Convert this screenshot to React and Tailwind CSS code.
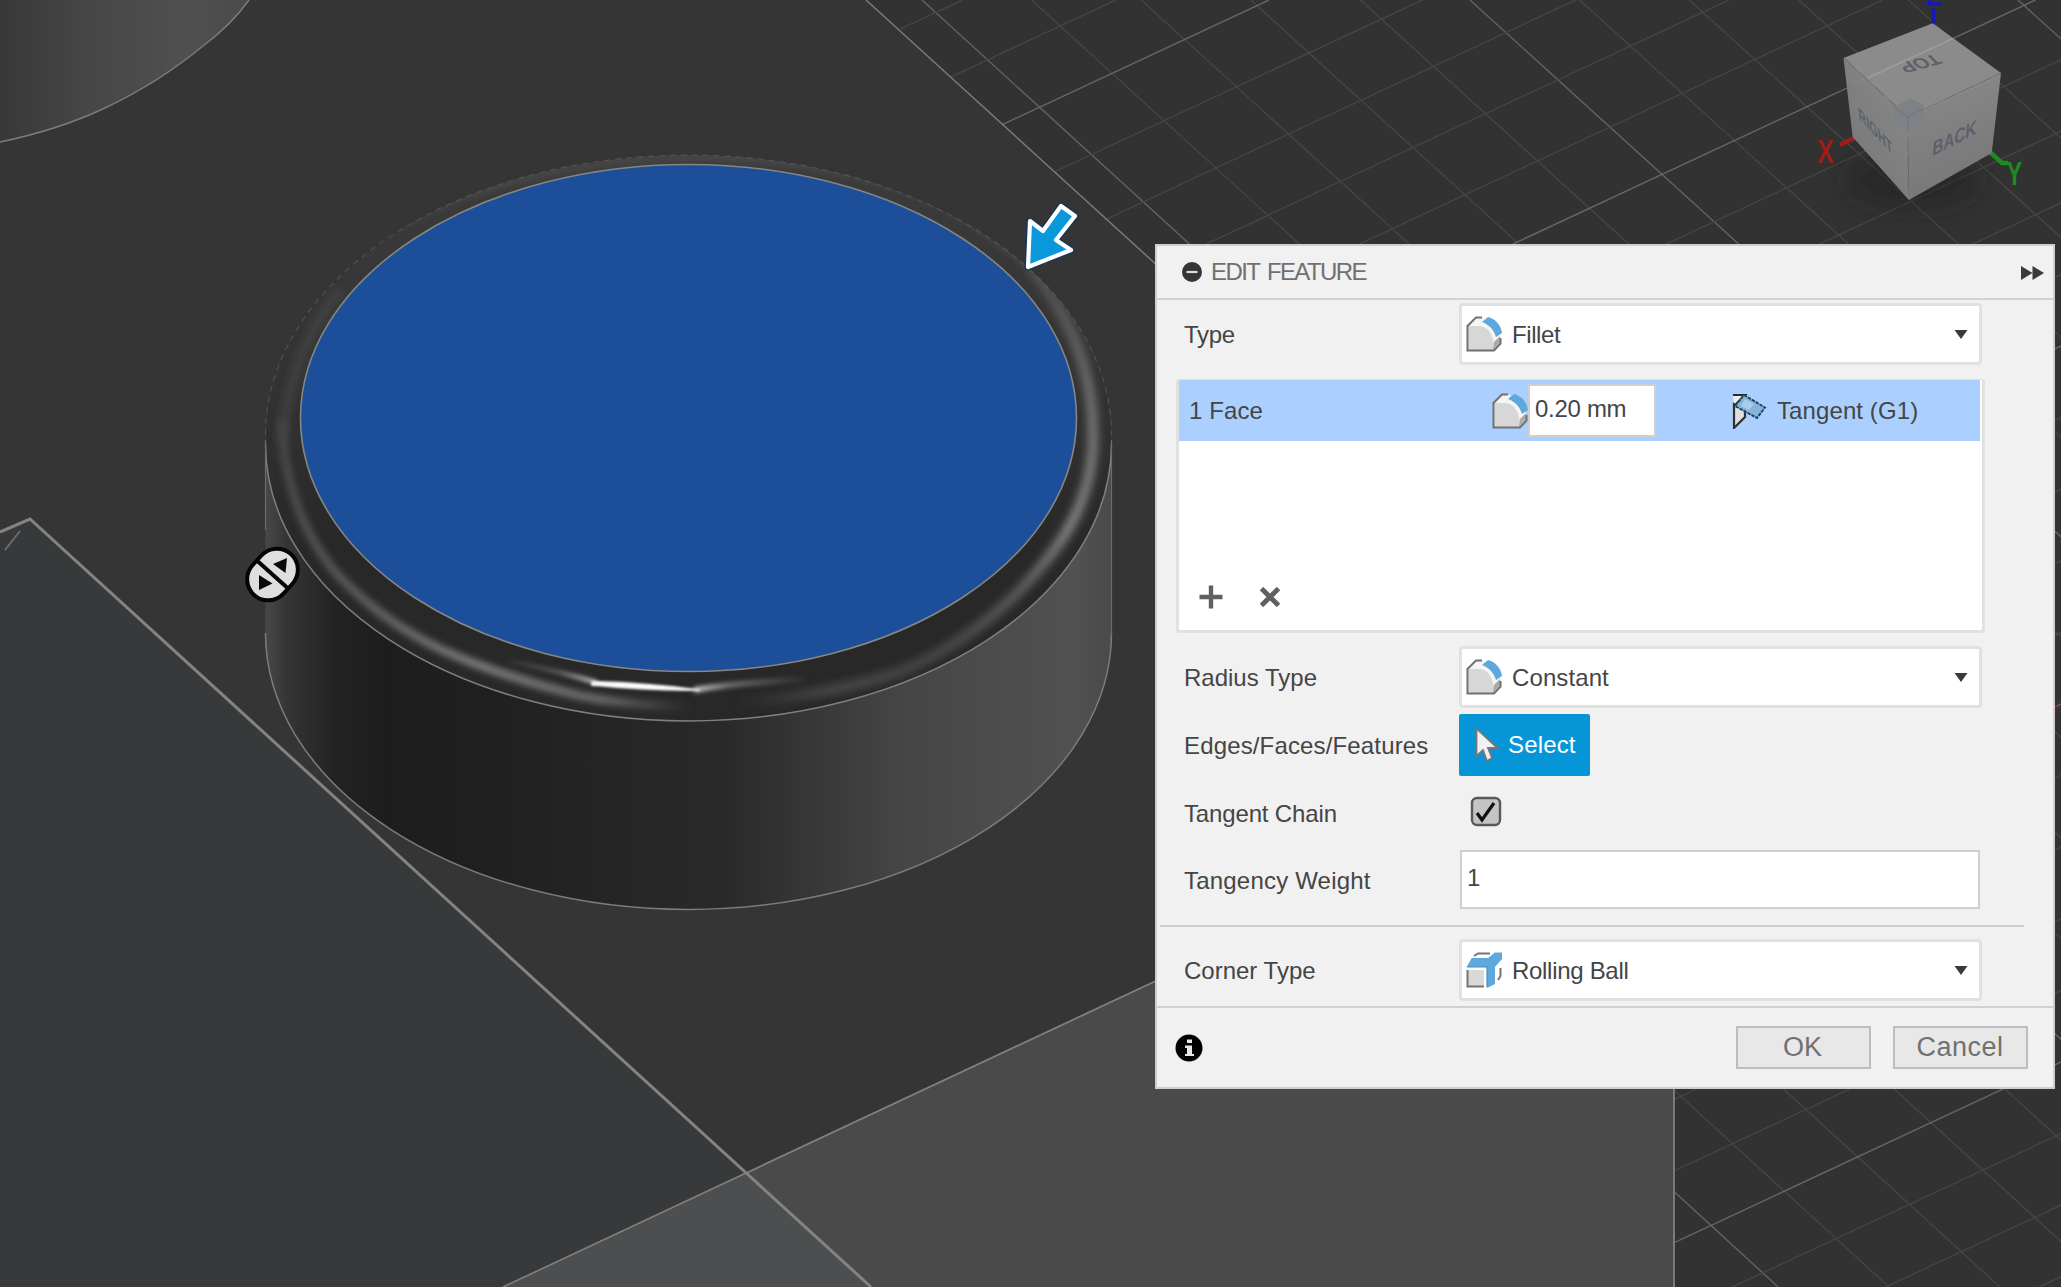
import React from 'react';

const range = (a, b) => Array.from({ length: b - a + 1 }, (_, i) => a + i);

function Grid() {
  return (
    <g fill="none" clipPath="url(#gridArea)">
      {range(-6, 11).map((k) => {
        const x = 922 + 109.6 * k;
        return (
          <line key={'a' + k} x1={x} y1="0" x2={x + 1287 * (1.096 + 0.001 * k)} y2="1287"
            stroke={k % 5 === 0 ? '#626262' : '#454545'} strokeWidth="1.4" />
        );
      })}
      {range(-8, 20).map((k) => {
        const x = 2035.5 + 153.3 * k;
        return (
          <line key={'b' + k} x1={x} y1="0" x2={x - 1287 / 0.467} y2="1287"
            stroke={k % 5 === 0 ? '#666' : '#454545'} strokeWidth="1.4" />
        );
      })}
    </g>
  );
}

function ViewCube() {
  return (
    <g>
      <ellipse cx="1912" cy="180" rx="66" ry="26" fill="#1c1c1c" opacity=".5" filter="url(#blur14)" />
      <path d="M1933.5 8V26" stroke="#1a1ab0" strokeWidth="4" />
      <path d="M1856 137L1840 145" stroke="#a01c1c" strokeWidth="4.5" />
      <path d="M1990 152L2002 163H2008" stroke="#1c8c20" strokeWidth="4.5" fill="none" />
      <path d="M1932.7 23.3L2001 73L1907.7 117L1843.500 58Z" fill="#8b8b8b" />
      <path d="M1843.500 58L1907.7 117L1909 200L1852.7 137Z" fill="url(#cubeL)" />
      <path d="M1907.7 117L2001 73L1991.7 153L1909 200Z" fill="url(#cubeR)" />
      <path d="M1780 119L2040 -2" stroke="#aaa" strokeWidth="1.3" opacity=".65" clipPath="url(#cubeClip)" />
      <path d="M1907.7 117L2001 73M1845 59L1907.7 117" stroke="#707478" strokeWidth="1.1" strokeDasharray="13 7" />
      <path d="M1907.7 117V195" stroke="#70757a" strokeWidth="1" strokeDasharray="12 8" />
      <path d="M1850 84L1915 55M1908 117L2000 76" stroke="#aaa" opacity=".2" />
      <path d="M1894 108L1910 98L1924 105V122L1909 132L1894 124Z" fill="#7e8286" />
      <path d="M1894 108L1907.7 117L1924 108M1907.7 117V131" stroke="#70757a" strokeWidth="1" fill="none" />
      <g fontFamily="'Liberation Sans', Arial, sans-serif" fontWeight="700" fontSize="17" textAnchor="middle" fill="#5c6169">
        <text transform="matrix(-1.08 .3 -.75 -.78 1916 59)">TOP</text>
        <text transform="matrix(.9 -.46 -.08 1.2 1954 145)">BACK</text>
        <text transform="matrix(.64 .68 .12 1.05 1876 137)">RIGHT</text>
      </g>
      <g fontFamily="'Liberation Sans', Arial, sans-serif" fontWeight="700" fontSize="33" textAnchor="middle">
        <text transform="matrix(.74 0 0 1 1825.5 162.5)" fill="#a01c1c">X</text>
        <text transform="matrix(.7 0 0 1 2014.5 185)" fill="#1c8c20">Y</text>
        <text transform="matrix(.8 0 0 1 1934 5.5)" fill="#1a1ab0">Z</text>
      </g>
    </g>
  );
}

function Puck() {
  return (
    <g>
      <path d="M265.5 435A423 280 0 0 1 1111.5 435V633A423 277 0 0 1 265.5 633Z" fill="url(#side)" />
      <path d="M265.5 435A423 280 0 0 1 1111.5 435V444A423 277 0 0 1 265.5 444Z" fill="url(#rim)" />
      <g clipPath="url(#rimClip)" fill="none">
        <path d="M283 440C284 400 300 340 340 290" stroke="#444" strokeWidth="7" filter="url(#blur4)" />
        <path d="M282 420C282 466 296 526 336 573Q380 620 440 649Q497 675 573 694Q613 704 690 707" stroke="url(#hiL)" strokeWidth="9" filter="url(#blur3)" />
        <path d="M1030 265C1080 330 1094 385 1093 440C1092 490 1072 530 1045 562C1015 600 965 645 900 672Q840 692 740 706" stroke="url(#hiR)" strokeWidth="10" filter="url(#blur4)" />
        <path d="M400 225C560 140 790 140 930 200C990 230 1030 265 1060 300" stroke="#4c4c4c" strokeWidth="5" filter="url(#blur3)" />
        <path d="M500 659Q567 673 597 683" stroke="url(#fadeL)" strokeWidth="4.5" filter="url(#blur2)" />
        <path d="M694 690Q735 683 810 679" stroke="url(#fadeR)" strokeWidth="5.500" filter="url(#blur2)" />
        <path d="M592 681.500Q650 683 700 690Q650 691 592 685Z" stroke="#e6e6e6" fill="#fff" strokeWidth="1.500" filter="url(#blur1)" />
      </g>
      <path d="M265.5 435A423 280 0 0 1 1111.5 435" fill="none" stroke="#666" strokeWidth="1.1" strokeDasharray="6 5" opacity=".6" />
      <path d="M265.5 444A423 277 0 0 0 1111.5 444" fill="none" stroke="#808080" strokeWidth="1.5" />
      <path d="M265.5 633A423 276.5 0 0 0 1111.5 633" fill="none" stroke="#7c7c7c" strokeWidth="1.5" />
      <path d="M1111.5 440V635M265.5 440V530" stroke="#6c6c6c" strokeWidth="1.2" />
      <ellipse cx="688.5" cy="418" rx="388" ry="253.5" fill="#1c4e9a" stroke="#868682" strokeWidth="1.6" />
    </g>
  );
}

function Scene() {
  return (
    <svg className="block h-[1287px] w-[2061px]" viewBox="0 0 2061 1287">
      <defs>
        <clipPath id="gridArea"><path d="M865 0L1150 260L1674 760V1287H2061V0Z" /></clipPath>
        <clipPath id="rimClip"><path d="M265.5 435A423 280 0 0 1 1111.5 435V444A423 277 0 0 1 265.5 444Z" /></clipPath>
        <clipPath id="cubeClip"><path d="M1932.7 23.3L2001 73L1907.7 117L1843 57Z" /></clipPath>
        <linearGradient id="side">
          <stop offset="0" stopColor="#484848" /><stop offset=".025" stopColor="#353535" />
          <stop offset=".08" stopColor="#232323" /><stop offset=".14" stopColor="#1d1d1d" />
          <stop offset=".27" stopColor="#202020" /><stop offset=".4" stopColor="#252525" />
          <stop offset=".54" stopColor="#292929" /><stop offset=".63" stopColor="#353535" />
          <stop offset=".75" stopColor="#454545" /><stop offset=".86" stopColor="#4c4c4c" />
          <stop offset=".96" stopColor="#515151" /><stop offset="1" stopColor="#4a4a4a" />
        </linearGradient>
        <linearGradient id="rim" gradientUnits="userSpaceOnUse" x1="0" y1="155" x2="0" y2="721">
          <stop offset="0" stopColor="#3c3c3c" /><stop offset=".4" stopColor="#333" />
          <stop offset=".7" stopColor="#282828" /><stop offset="1" stopColor="#282828" />
        </linearGradient>
        <linearGradient id="hiL" gradientUnits="userSpaceOnUse" x1="282" y1="430" x2="690" y2="706">
          <stop offset="0" stopColor="#444" /><stop offset=".3" stopColor="#585858" />
          <stop offset=".6" stopColor="#7a7a7a" /><stop offset=".85" stopColor="#686868" /><stop offset="1" stopColor="#282828" />
        </linearGradient>
        <linearGradient id="hiR" gradientUnits="userSpaceOnUse" x1="0" y1="265" x2="0" y2="705">
          <stop offset="0" stopColor="#505050" /><stop offset=".35" stopColor="#757575" />
          <stop offset=".6" stopColor="#848484" /><stop offset=".75" stopColor="#5c5c5c" />
          <stop offset=".9" stopColor="#464646" /><stop offset=".97" stopColor="#4a4a4a" /><stop offset="1" stopColor="#282828" />
        </linearGradient>
        <linearGradient id="fadeL" gradientUnits="userSpaceOnUse" x1="500" y1="0" x2="597" y2="0">
          <stop offset="0" stopColor="#282828" /><stop offset=".6" stopColor="#585858" /><stop offset="1" stopColor="#c8c8c8" />
        </linearGradient>
        <linearGradient id="fadeR" gradientUnits="userSpaceOnUse" x1="694" y1="0" x2="810" y2="0">
          <stop offset="0" stopColor="#ccc" /><stop offset=".3" stopColor="#707070" /><stop offset="1" stopColor="#282828" />
        </linearGradient>
        <linearGradient id="corner" gradientUnits="userSpaceOnUse" x1="0" y1="0" x2="247" y2="0">
          <stop offset="0" stopColor="#383838" /><stop offset=".35" stopColor="#464646" />
          <stop offset=".75" stopColor="#505050" /><stop offset="1" stopColor="#4a4a4a" />
        </linearGradient>
        <linearGradient id="cubeL" x1="1" y1="0" x2=".2" y2="1">
          <stop offset="0" stopColor="#8b8b8b" /><stop offset="1" stopColor="#767676" />
        </linearGradient>
        <linearGradient id="cubeR" x1="0" y1="0" x2=".3" y2="1">
          <stop offset="0" stopColor="#8b8b8b" /><stop offset="1" stopColor="#777" />
        </linearGradient>
        <filter id="blur1" x="-20%" y="-100%" width="140%" height="300%"><feGaussianBlur stdDeviation="1.1" /></filter>
        <filter id="blur2" x="-20%" y="-100%" width="140%" height="300%"><feGaussianBlur stdDeviation="2" /></filter>
        <filter id="blur3" x="-20%" y="-20%" width="140%" height="140%"><feGaussianBlur stdDeviation="3" /></filter>
        <filter id="blur4" x="-40%" y="-20%" width="180%" height="140%"><feGaussianBlur stdDeviation="4" /></filter>
        <filter id="blur14" x="-80%" y="-120%" width="260%" height="340%"><feGaussianBlur stdDeviation="14" /></filter>
      </defs>
      <rect width="2061" height="1287" fill="#353535" />
      <path d="M865 0L1150 260L1674 760V1287H2061V0Z" fill="#323232" />
      <Grid />
      <path d="M2054 707.5H2060" stroke="#7c2020" strokeWidth="2" />
      <path d="M866 0L1160 268" stroke="#7a7a7a" strokeWidth="1.5" />
      <path d="M503 1287L1160 979V900H1674V1287Z" fill="#4a4a4a" />
      <path d="M503 1287L1160 979M1674 1080V1287" stroke="#808080" strokeWidth="1.8" />
      <path d="M0 532L30 519L871 1287H0Z" fill="#37393b" />
      <path d="M503 1287L746 1173L871 1287Z" fill="#4c4e50" />
      <path d="M503 1287L746 1173" stroke="#808080" strokeWidth="1.6" />
      <path d="M0 532L30 519L871 1287" fill="none" stroke="#828383" strokeWidth="3" />
      <path d="M5 550L20 531" stroke="#6c6c6c" strokeWidth="2" />
      <path d="M249 0Q231 25 203 46Q158 83 105 108Q58 130 0 142V0Z" fill="url(#corner)" />
      <path d="M249 0Q231 25 203 46Q158 83 105 108Q58 130 0 142" fill="none" stroke="#7c7c7c" strokeWidth="1.5" />
      <Puck />
      <g strokeLinejoin="round">
        <path d="M1061 206L1075 216L1056 240L1071 250L1028 267L1030 221L1043 231Z" fill="none" stroke="#16365c" strokeWidth="7" />
        <path d="M1061 206L1075 216L1056 240L1071 250L1028 267L1030 221L1043 231Z" fill="#0a98dc" stroke="#fff" strokeWidth="4.2" />
      </g>
      <g transform="translate(272.5 574.5) rotate(-48)">
        <rect x="-27.5" y="-21" width="55" height="42" rx="21" fill="#dedede" stroke="#050505" strokeWidth="4" />
        <path d="M0 -21V21" stroke="#050505" strokeWidth="4" />
      </g>
      <path d="M273 564L287 558L285.500 573ZM259 575L272.500 583.500L259 590Z" fill="#0a0a0a" />
      <ViewCube />
    </svg>
  );
}

function FilletIcon() {
  return (
    <svg className="size-9 shrink-0" viewBox="0 0 36 36">
      <path d="M1.5 34.5V10L10 1.5H17L34 19V27L27.5 34.5Z" fill="#f5f5f5" />
      <path d="M2.5 34V10H12C21 10 28 17 28 34Z" fill="#d7d7d7" />
      <path d="M27 34L34 26V20L28 26Z" fill="#aaa" />
      <path d="M16 1.500H10L1.500 10V34.500H28L34.500 27.500V22" fill="none" stroke="#707070" strokeWidth="2" />
      <path d="M22 1C30 3 35 9.500 36 17L30 21C28 14 23 8.500 16 6Z" fill="#5da8dc" />
    </svg>
  );
}

function TangentIcon() {
  return (
    <svg className="size-9 shrink-0" viewBox="0 0 36 36">
      <path d="M1 2H12L2 13Z" fill="#eee" />
      <path d="M1 2H13L4 11" fill="none" stroke="#292929" strokeWidth="2.200" />
      <path d="M2 11V35L13 24V17Z" fill="#e0dede" stroke="#303030" strokeWidth="2.200" />
      <path d="M12 2L33 14.500L25 25L3 13Z" fill="#86b4d8" stroke="#1b4165" strokeWidth="1.900" strokeDasharray="3.500 1" />
      <path d="M13 6L22 11L17 17L9 13Z" fill="#a9cde8" />
    </svg>
  );
}

function CornerIcon() {
  return (
    <svg className="size-9 shrink-0" viewBox="0 0 36 36">
      <path d="M1 18H18V35H1Z" fill="#d9d9d9" />
      <path d="M1.500 18V34.500H18M8 4L12 1.500H24M32 28L34.500 24V16" fill="none" stroke="#747474" strokeWidth="2" />
      <path d="M0.700 15L5.700 6H22L29 0.500H36V7L29 15V32L21 36V15Z" fill="#5da8dc" />
      <path d="M1 15H21V35" fill="none" stroke="#4690c6" strokeWidth="1.200" />
    </svg>
  );
}

function Dropdown({ icon, children }) {
  return (
    <div className="flex h-[62px] w-[523px] items-center rounded-[4px] border-[3px] border-[#e1e1e1] bg-white pl-[4px] pr-[11px]">
      {icon}
      <span className="ml-[10px] flex-1 whitespace-nowrap pt-px leading-7">{children}</span>
      <svg className="h-[9px] w-[14px]" viewBox="0 0 14 9"><path d="M0.500 0H13.500L7 9Z" fill="#3a3a3a" /></svg>
    </div>
  );
}

function Row({ label, className, children }) {
  return (
    <div className={'flex items-center pl-[27px] ' + className}>
      <span className="w-[275px] shrink-0 whitespace-nowrap pt-px">{label}</span>
      {children}
    </div>
  );
}

function Panel() {
  return (
    <section className="absolute left-[1155px] top-[244px] flex h-[845px] w-[900px] flex-col border-2 border-[#cfcfcf] bg-[#f1f1f1] text-[24px] text-[#454545]">
      <header className="flex h-[54px] shrink-0 items-center border-b-2 border-[#d2d2d2] pl-[25px] pr-[9px]">
        <svg className="size-5" viewBox="0 0 20 20"><circle cx="10" cy="10" r="10" fill="#353535" /><path d="M4.500 10H15.500" stroke="#ddd" strokeWidth="2.200" /></svg>
        <h1 className="ml-[9px] flex-1 whitespace-nowrap tracking-[-1.6px] [word-spacing:3px] text-[#707070]">EDIT FEATURE</h1>
        <svg className="mt-[2px] h-[14px] w-[23px]" viewBox="0 0 23 14"><path d="M0 0L11.500 7L0 14ZM11.500 0L23 7L11.500 14Z" fill="#3a3a3a" /></svg>
      </header>
      <Row label="Type" className="mt-[3px] h-[62px] tracking-[-0.3px]"><Dropdown icon={<FilletIcon />}><span className="tracking-[-0.4px]">Fillet</span></Dropdown></Row>
      <div className="ml-[19px] mt-[14px] flex h-[254px] w-[809px] flex-col rounded-[3px] border-[3px] border-t-1 border-[#e1e1e1] bg-white">
        <div className="flex h-[61px] w-[801px] shrink-0 items-center bg-[#abd0ff] pl-[10px]">
          <span className="w-[303px] tracking-[0.1px]">1 Face</span>
          <FilletIcon />
          <div className="flex h-[53px] w-[128px] items-center border-2 border-[#cfcfcf] bg-white pb-[4px] pl-[5px] tracking-[-0.3px]">0.20 mm</div>
          <span className="ml-[76px] flex items-center gap-[9px]"><TangentIcon /><span className="tracking-[0.1px]">Tangent (G1)</span></span>
        </div>
        <div className="mb-[21px] ml-[20px] mt-auto flex items-center gap-[37px]">
          <svg className="size-6" viewBox="0 0 24 24"><path d="M12 0.500V23.500M0.500 12H23.500" stroke="#606060" strokeWidth="4.400" /></svg>
          <svg className="size-5" viewBox="0 0 20 20"><path d="M1.500 1.500L18.500 18.500M18.500 1.500L1.500 18.500" stroke="#606060" strokeWidth="4.800" /></svg>
        </div>
      </div>
      <Row label="Radius Type" className="mt-[13px] h-[62px]"><Dropdown icon={<FilletIcon />}><span className="tracking-[0.1px]">Constant</span></Dropdown></Row>
      <Row label="Edges/Faces/Features" className="mt-[6px] h-[62px] tracking-[0.15px]">
        <button className="flex h-[62px] w-[131px] items-center rounded-[2px] bg-[#0696d7] pl-[16px] text-white">
          <svg className="h-[36px] w-[24px]" viewBox="0 0 24 36"><path d="M1.500 1.500V29L8 23L12 34L17 31L13 21H22.500Z" fill="#f2f2f2" stroke="#777" strokeWidth="1.800" /></svg>
          <span className="ml-[9px]">Select</span>
        </button>
      </Row>
      <Row label="Tangent Chain" className="mt-[6px] h-[62px] tracking-[-0.15px]">
        <svg className="mb-[2px] ml-[11px] size-8" viewBox="0 0 32 32">
          <rect x="2" y="2" width="28" height="27" rx="5" fill="#c4c4c4" stroke="#595959" strokeWidth="2.400" />
          <path d="M7 17L12 24L24 7" fill="none" stroke="#111" strokeWidth="3.200" />
        </svg>
      </Row>
      <Row label="Tangency Weight" className="mt-[5px] h-[62px] tracking-[0.2px]">
        <div className="mb-px ml-px flex h-[59px] w-[520px] items-center border-2 border-[#cfcfcf] bg-white pb-[4px] pl-[5px]">1</div>
      </Row>
      <div className="ml-[3px] mt-[14px] h-[2px] w-[864px] shrink-0 bg-[#cdcdcd]" />
      <Row label="Corner Type" className="mt-[12px] h-[62px]"><Dropdown icon={<CornerIcon />}><span className="tracking-[-0.3px]">Rolling Ball</span></Dropdown></Row>
      <footer className="mt-auto flex h-[81px] shrink-0 items-center border-t-2 border-[#d0d0d0] pl-[18px] pr-[25px] text-[27px] text-[#717171]">
        <svg className="size-7" viewBox="0 0 28 28"><circle cx="14" cy="14" r="13.500" fill="#000" /><path d="M12 5.500H17V9H12ZM10 11.500H17V20H19V22H10V20H12V14H10Z" fill="#e8e8e8" /></svg>
        <button className="ml-auto h-[43px] w-[135px] border-2 border-[#bdbdbd] bg-[#e8e8e8] pr-[2px] leading-[39px]">OK</button>
        <button className="ml-[22px] h-[43px] w-[135px] border-2 border-[#bdbdbd] bg-[#e8e8e8] pr-px leading-[39px] tracking-[0.5px]">Cancel</button>
      </footer>
    </section>
  );
}

export default function App() {
  return (
    <main className="relative h-[1287px] w-[2061px] overflow-hidden bg-[#353535] font-['Liberation_Sans',Arial,sans-serif]">
      <Scene />
      <Panel />
    </main>
  );
}
